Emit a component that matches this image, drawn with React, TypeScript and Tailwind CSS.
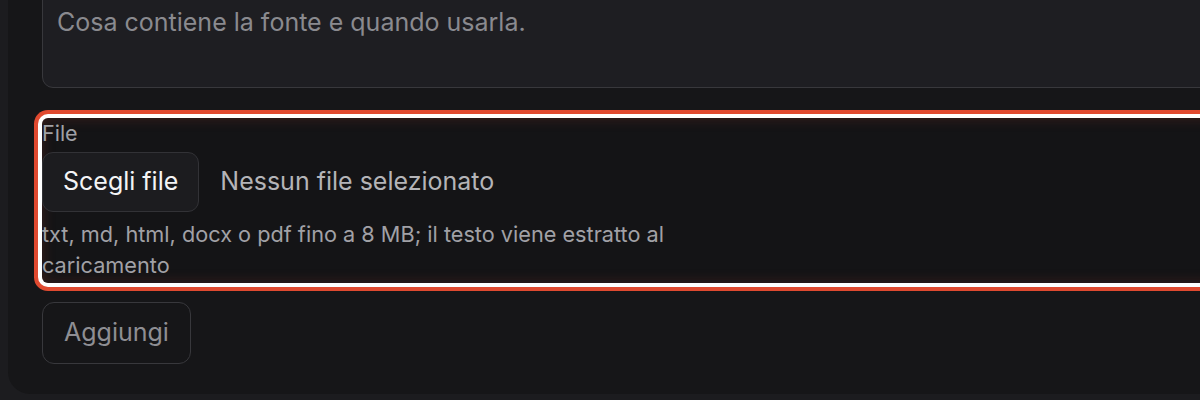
import React from 'react';

const App: React.FC = () => {
  return (
    <div
      className="w-[1200px] h-[400px] overflow-hidden bg-[#1c1c1f] pl-[8px]"
      style={{ fontFamily: 'Inter, "Liberation Sans", sans-serif' }}
    >
      <div className="h-[394px] rounded-bl-[22px] bg-[#161618] pl-[34px] flex flex-col">
        {/* description textarea, top cut off by the viewport */}
        <textarea
          placeholder="Cosa contiene la fonte e quando usarla."
          className="mt-[-40px] h-[128px] w-[1200px] resize-none rounded-[11px] border border-[#38383c] bg-[#1e1e22] pl-[14px] pt-[43px] text-[25px] leading-[37px] text-white placeholder:text-[#8a8a8f] outline-none"
        />

        {/* file field, highlighted */}
        <div className="mt-[30px] w-[1200px] rounded-[6px] bg-[#141416] pb-[2px] shadow-[0_0_0_4px_#ffffff,0_0_0_8px_#e04a30,inset_0_0_14px_rgba(200,70,50,0.22)] flex flex-col">
          <label className="text-[21.5px] leading-[31px] text-[#a1a1a6]">File</label>
          <div className="mt-[3px] flex items-center gap-[21px]">
            <button className="h-[60px] rounded-[11px] border border-[#323236] bg-[#1c1c1f] px-[20px] text-[25px] text-[#f4f4f5]">
              Scegli file
            </button>
            <span className="text-[25px] text-[#b4b4b8]">Nessun file selezionato</span>
          </div>
          <p className="mt-[7px] max-w-[690px] text-[21.7px] leading-[31px] text-[#a1a1a6]">
            txt, md, html, docx o pdf fino a 8 MB; il testo viene estratto al caricamento
          </p>
        </div>

        <div className="mt-[19px]">
          <button className="h-[62px] rounded-[12px] border border-[#38383c] bg-transparent px-[21px] text-[25px] text-[#8e8e93]">
            Aggiungi
          </button>
        </div>
      </div>
    </div>
  );
};

export default App;
